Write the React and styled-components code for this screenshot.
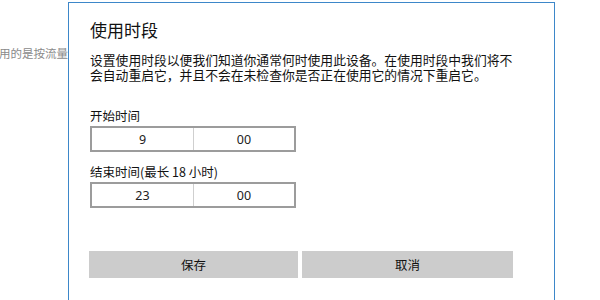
import React from 'react'
import styled, { createGlobalStyle } from 'styled-components'

const Global = createGlobalStyle`
  html, body {
    margin: 0;
    padding: 0;
    background: #fff;
  }
  body {
    width: 600px;
    height: 300px;
    overflow: hidden;
    font-family: "Noto Sans CJK SC", "Noto Sans", sans-serif;
  }
`

const Page = styled.div`
  position: relative;
  width: 600px;
  height: 300px;
  overflow: hidden;
  background: #fff;
`

const BackText = styled.div`
  padding: 45px 0 0 0;
  margin-left: -1px;
  font-size: 11.5px;
  line-height: 16px;
  color: #8a8a8a;
  white-space: nowrap;
`

const Dialog = styled.div`
  position: absolute;
  left: 68px;
  top: 2px;
  width: 443px;
  height: 320px;
  border: 1px solid #3d87c9;
  background: #fff;
  padding: 15px 21px 0 21px;
  color: #111;
`

const Title = styled.div`
  font-size: 17px;
  line-height: 24px;
`

const Desc = styled.div`
  margin-top: 10px;
  font-size: 12.8px;
  line-height: 15px;
  white-space: nowrap;
`

const Line = styled.span`
  display: block;
`

const Label = styled.div`
  margin-top: ${p => p.$gap}px;
  font-size: 12.5px;
  line-height: 16px;
`

const TimeBox = styled.div`
  margin-top: 2px;
  width: 206px;
  height: 26px;
  box-sizing: border-box;
  border: 2px solid #9c9c9c;
  display: grid;
  grid-template-columns: 1fr 1fr;
`

const Cell = styled.div`
  display: flex;
  align-items: center;
  justify-content: center;
  font-size: 12.5px;
  color: #222;
  font-family: "Noto Sans", "Noto Sans CJK SC", sans-serif;
  & + & {
    border-left: 1px solid #cfcfcf;
  }
`

const Buttons = styled.div`
  margin-top: 43px;
  display: grid;
  grid-template-columns: 209px 211px;
  column-gap: 4px;
  margin-left: -1px;
`

const Button = styled.button`
  height: 27px;
  border: none;
  background: #cccccc;
  font-family: "Noto Sans CJK SC", sans-serif;
  font-size: 12.5px;
  color: #111;
  padding: 0;
`

export default function App() {
  return (
    <Page>
      <Global />
      <BackText>用的是按流量计费的连接</BackText>
      <Dialog>
        <Title>使用时段</Title>
        <Desc>
          <Line>设置使用时段以便我们知道你通常何时使用此设备。在使用时段中我们将不</Line>
          <Line>会自动重启它，并且不会在未检查你是否正在使用它的情况下重启它。</Line>
        </Desc>
        <Label $gap={26}>开始时间</Label>
        <TimeBox>
          <Cell>9</Cell>
          <Cell>00</Cell>
        </TimeBox>
        <Label $gap={12}>结束时间(最长 18 小时)</Label>
        <TimeBox>
          <Cell>23</Cell>
          <Cell>00</Cell>
        </TimeBox>
        <Buttons>
          <Button>保存</Button>
          <Button>取消</Button>
        </Buttons>
      </Dialog>
    </Page>
  )
}
